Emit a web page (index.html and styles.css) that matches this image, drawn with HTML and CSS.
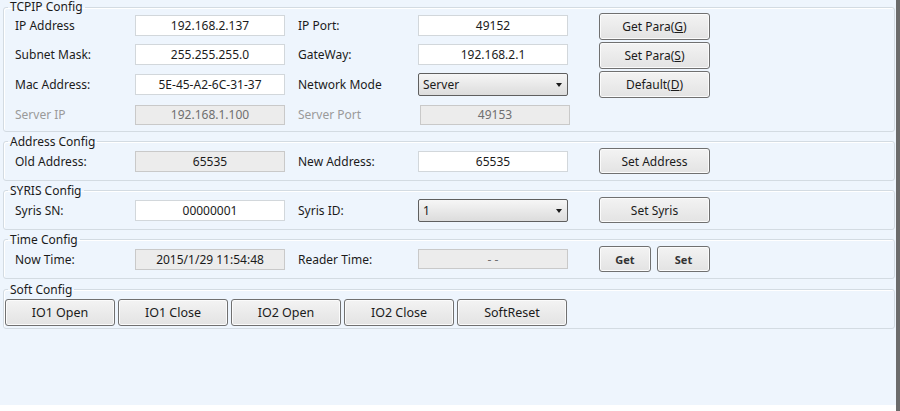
FILE: index.html
```html
<!DOCTYPE html>
<html>
<head>
<meta charset="utf-8">
<link rel="stylesheet" href="styles.css">
</head>
<body>
<div class="window">
  <div class="page">
    <fieldset class="group tcpip">
      <legend>TCPIP Config</legend>
      <div class="cols">
        <div class="grid">
          <div class="row">
            <span class="lbl">IP Address</span><span class="field">192.168.2.137</span>
            <span class="lbl lbl2">IP Port:</span><span class="field">49152</span>
          </div>
          <div class="row">
            <span class="lbl">Subnet Mask:</span><span class="field">255.255.255.0</span>
            <span class="lbl lbl2">GateWay:</span><span class="field">192.168.2.1</span>
          </div>
          <div class="row shift">
            <span class="lbl">Mac Address:</span><span class="field">5E-45-A2-6C-31-37</span>
            <span class="lbl lbl2">Network Mode</span><span class="select">Server<i class="arrow"></i></span>
          </div>
          <div class="row shift">
            <span class="lbl dim">Server IP</span><span class="field off">192.168.1.100</span>
            <span class="lbl lbl2 dim">Server Port</span><span class="field off port">49153</span>
          </div>
        </div>
        <div class="btncol">
          <button class="btn">Get Para(<u>G</u>)</button>
          <button class="btn">Set Para(<u>S</u>)</button>
          <button class="btn">Default(<u>D</u>)</button>
        </div>
      </div>
    </fieldset>

    <fieldset class="group">
      <legend>Address Config</legend>
      <div class="line">
        <span class="lbl">Old Address:</span><span class="field off dark">65535</span>
        <span class="lbl lbl2">New Address:</span><span class="field">65535</span>
        <button class="btn wide">Set Address</button>
      </div>
    </fieldset>

    <fieldset class="group">
      <legend>SYRIS Config</legend>
      <div class="line">
        <span class="lbl">Syris SN:</span><span class="field">00000001</span>
        <span class="lbl lbl2">Syris ID:</span><span class="select">1<i class="arrow"></i></span>
        <button class="btn wide">Set Syris</button>
      </div>
    </fieldset>

    <fieldset class="group">
      <legend>Time Config</legend>
      <div class="line">
        <span class="lbl">Now Time:</span><span class="field off dark">2015/1/29 11:54:48</span>
        <span class="lbl lbl2">Reader Time:</span><span class="field off">- -</span>
        <button class="btn small">Get</button>
        <button class="btn small set">Set</button>
      </div>
    </fieldset>

    <fieldset class="group soft">
      <legend>Soft Config</legend>
      <div class="softrow">
        <button class="btn sbtn">IO1 Open</button>
        <button class="btn sbtn">IO1 Close</button>
        <button class="btn sbtn">IO2 Open</button>
        <button class="btn sbtn">IO2 Close</button>
        <button class="btn sbtn">SoftReset</button>
      </div>
    </fieldset>
  </div>
  <div class="edge"></div>
</div>
</body>
</html>
```

FILE: styles.css
```css
* { box-sizing: border-box; }
html, body { margin: 0; padding: 0; background: #ffffff; }
body {
  font-family: "Noto Sans", "Open Sans", sans-serif;
  font-size: 12px;
  color: #1b1b1b;
}
.window {
  display: flex;
  width: 900px;
  height: 411px;
}
.page {
  width: 896px;
  height: 405px;
  background: #eef5fd;
  padding: 1px 1px 0 3px;
  display: flex;
  flex-direction: column;
  gap: 3px;
}
.edge {
  width: 4px;
  height: 411px;
  background: #6b6b6b;
}
.group {
  margin: 0;
  border: 1px solid #d3dbe2;
  box-shadow: inset 1px 1px 0 #ffffff;
  border-radius: 3px;
  padding: 0 10px 6px 11px;
  min-width: 0;
}
.group legend {
  padding: 0 2px;
  margin-left: -7px;
  line-height: 13px;
  font-size: 12px;
  color: #1b1b1b;
}
.tcpip { padding-top: 0; padding-bottom: 6px; }
.tcpip legend { line-height: 12px; }
.cols { display: flex; align-items: flex-start; }
.grid { display: flex; flex-direction: column; gap: 8px; padding-top: 2px; }
.row, .line { display: flex; align-items: center; }
.row { height: 21px; }
.row.shift { margin-top: 1px; }
.line { height: 26px; }
.lbl { width: 120px; flex: none; white-space: nowrap; }
.lbl2 { width: 120px; margin-left: 13px; }
.dim { color: #9a9a9a; }
.field {
  width: 150px;
  height: 21px;
  flex: none;
  background: #ffffff;
  border: 1px solid #d2d7db;
  display: flex;
  align-items: center;
  justify-content: center;
}
.field.off {
  background: #ececec;
  border-color: #c9c9c9;
  color: #6f6f6f;
  height: 20px;
}
.field.off.dark { color: #1b1b1b; height: 21px; }
.field.port { margin-left: 2px; }
.select {
  width: 150px;
  height: 23px;
  flex: none;
  border: 1px solid #5f5f5f;
  border-radius: 2px;
  background: linear-gradient(#f6f6f6, #dcdcdc);
  display: flex;
  align-items: center;
  padding-left: 4px;
  position: relative;
}
.arrow {
  position: absolute;
  right: 5px;
  top: 9px;
  width: 0; height: 0;
  border-left: 3.5px solid transparent;
  border-right: 3.5px solid transparent;
  border-top: 4px solid #1b1b1b;
}
.btn {
  font-family: inherit;
  font-size: 12px;
  color: #1b1b1b;
  background: linear-gradient(#f3f3f3, #e3e3e3);
  border: 1px solid #707070;
  border-radius: 3px;
  padding: 0;
  width: 111px;
  height: 27px;
  flex: none;
  box-shadow: inset 0 0 0 1px #fbfbfb;
}
.btn u { text-decoration: underline; }
.btncol {
  display: flex;
  flex-direction: column;
  gap: 2px;
  margin-left: 29px;
}
.wide { margin-left: 31px; height: 26px; }
.small { margin-left: 31px; width: 52px; height: 26px; font-size: 11px; font-weight: bold; color: #333; }
.small.set { margin-left: 6px; width: 53px; }
.soft { padding: 3px 0 2px 1px; margin-top: 1px; }
.soft legend { margin-left: 3px; }
.softrow { display: flex; gap: 3px; }
.sbtn { width: 110px; height: 27px; font-size: 12.5px; }
```
